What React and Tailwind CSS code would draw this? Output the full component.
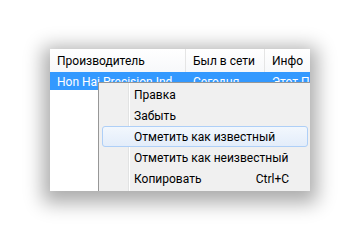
import React from 'react';

const font = { fontFamily: 'Roboto, "Noto Sans", "DejaVu Sans", sans-serif' };

const items = [
  { label: 'Правка' },
  { label: 'Забыть' },
  { label: 'Отметить как известный', active: true },
  { label: 'Отметить как неизвестный' },
  { label: 'Копировать', shortcut: 'Ctrl+C' },
];

const ContextMenu = () => (
  <div className="absolute left-[48px] top-[33px] w-[214px] h-[120px] bg-[#f0f0f0] border border-[#979797] pt-[1px] px-[3px]">
    <div className="absolute left-[29px] top-0 bottom-0 w-[1px] bg-[#e2e3e3]" />
    <div className="absolute left-[30px] top-0 bottom-0 w-[1px] bg-white" />
    {items.map((item) => (
      <div
        key={item.label}
        className={
          'relative flex items-center h-[21px] pl-[31px] pr-[18px] rounded-[3px] border whitespace-nowrap ' +
          (item.active
            ? 'border-[#aecff7] bg-gradient-to-b from-[#f2f7fd] to-[#e3edfa]'
            : 'border-transparent')
        }
      >
        <span className="flex-1 text-[12px] text-black leading-none">{item.label}</span>
        {item.shortcut && <span className="text-[12px] text-black leading-none">{item.shortcut}</span>}
      </div>
    ))}
  </div>
);

export default function App() {
  return (
    <div className="w-[360px] h-[240px] bg-white pt-[49px] pl-[50px]" style={font}>
      <div className="relative w-[260px] h-[142px] bg-white overflow-hidden shadow-[0_5px_18px_7px_rgba(0,0,0,0.33)]">
        <div className="flex h-[23px] bg-gradient-to-b from-white to-[#f7f8fa] text-[12px] text-black whitespace-nowrap">
          <div className="w-[136px] flex items-center pl-[7px] border-r border-[#e5e5e5]">Производитель</div>
          <div className="w-[79px] flex items-center pl-[7px] border-r border-[#e5e5e5]">Был в сети</div>
          <div className="flex-1 flex items-center pl-[7px]">Инфо</div>
        </div>
        <div className="flex h-[18px] pt-[2px] bg-[#3399ff] text-[12px] text-white whitespace-nowrap">
          <div className="w-[136px] flex items-center pl-[7px] overflow-hidden">Hon Hai Precision Ind...</div>
          <div className="w-[79px] flex items-center pl-[7px]">Сегодня</div>
          <div className="flex-1 flex items-center pl-[7px] overflow-hidden">Этот ПК</div>
        </div>
        <ContextMenu />
      </div>
    </div>
  );
}
